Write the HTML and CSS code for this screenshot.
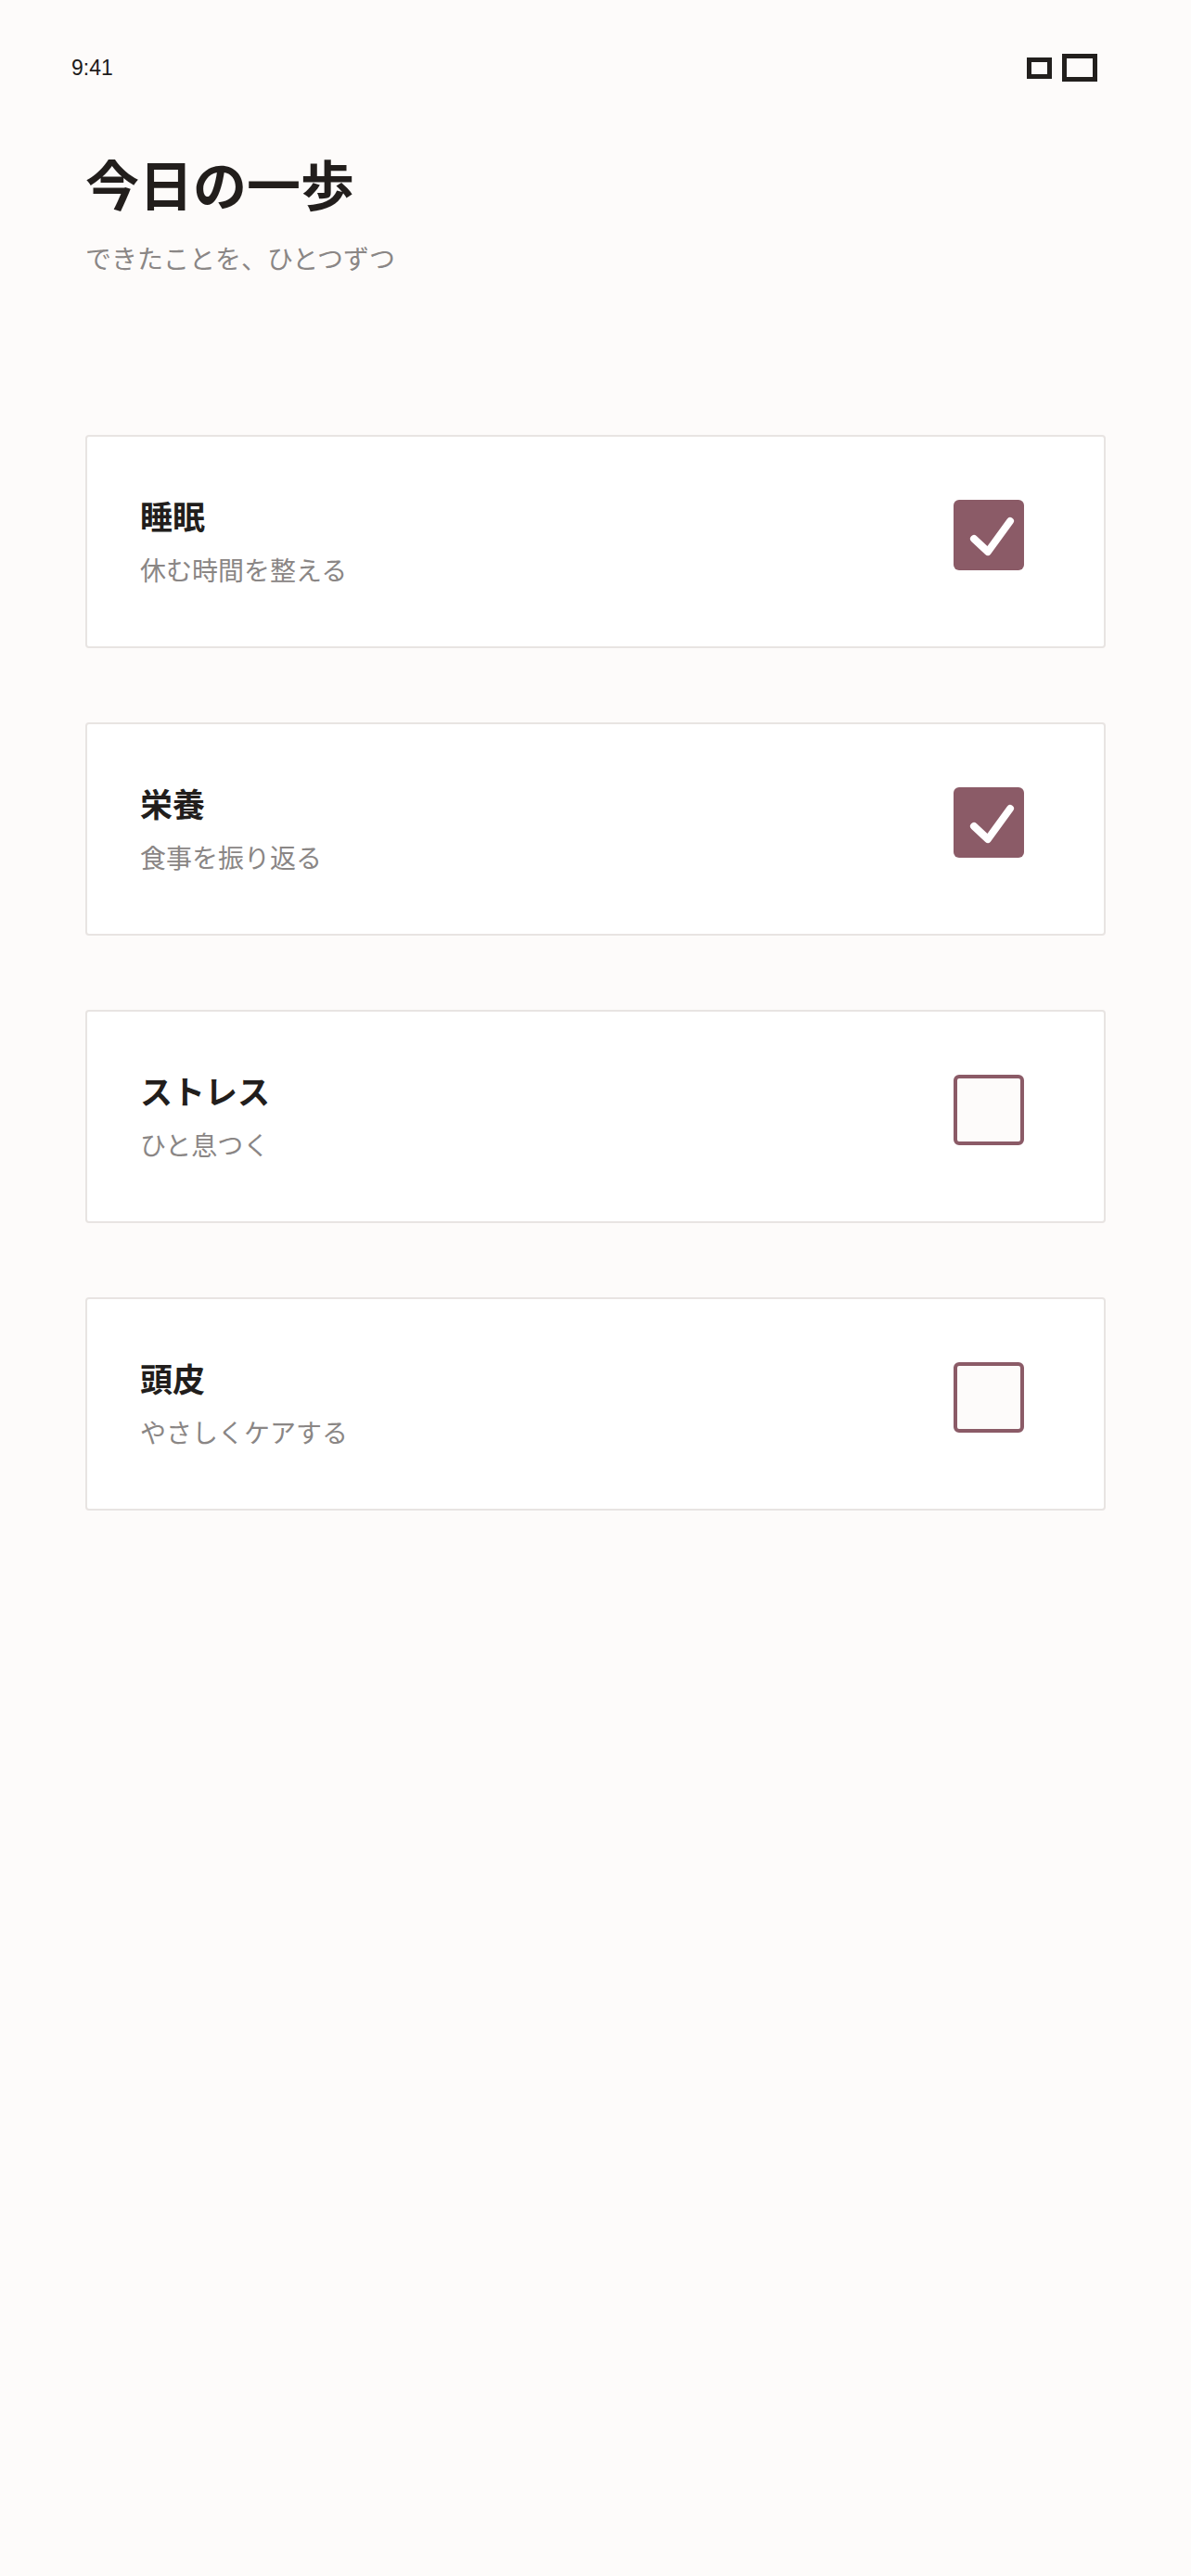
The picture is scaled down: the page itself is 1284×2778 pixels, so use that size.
FILE: index.html
```html
<!DOCTYPE html>
<html lang="ja">
<head>
    <meta charset="UTF-8">
    <meta name="viewport" content="width=device-width, initial-scale=1.0">
    <title>今日の一歩</title>
    <link rel="stylesheet" href="styles.css">
</head>
<body>
    <div class="status-bar">
        <span class="time">9:41</span>
        <div class="status-icons">
            <span class="icon-small"></span>
            <span class="icon-big"></span>
        </div>
    </div>

    <header class="header">
        <h1>今日の一歩</h1>
        <p>できたことを、ひとつずつ</p>
    </header>

    <div class="list">
        <div class="card">
            <div class="text">
                <h2>睡眠</h2>
                <p>休む時間を整える</p>
            </div>
            <div class="check done">
                <svg viewBox="0 0 76 76" width="76" height="76"><path d="M22 42 L37 56 L61 23" /></svg>
            </div>
        </div>
        <div class="card">
            <div class="text">
                <h2>栄養</h2>
                <p>食事を振り返る</p>
            </div>
            <div class="check done">
                <svg viewBox="0 0 76 76" width="76" height="76"><path d="M22 42 L37 56 L61 23" /></svg>
            </div>
        </div>
        <div class="card">
            <div class="text">
                <h2>ストレス</h2>
                <p>ひと息つく</p>
            </div>
            <div class="check"></div>
        </div>
        <div class="card">
            <div class="text">
                <h2>頭皮</h2>
                <p>やさしくケアする</p>
            </div>
            <div class="check"></div>
        </div>
    </div>
</body>
</html>
```

FILE: styles.css
```css
* {
    margin: 0;
    padding: 0;
    box-sizing: border-box;
}

body {
    background-color: #fdfbfa;
    font-family: "Noto Sans CJK JP", "Noto Sans", sans-serif;
    color: #221e1c;
}

/* 状态栏 */
.status-bar {
    height: 146px;
    display: flex;
    align-items: center;
    justify-content: space-between;
    padding: 0 101px 0 77px;
}

.time {
    font-family: "Liberation Sans", Arial, sans-serif;
    font-size: 23px;
    color: #1e1c1b;
}

.status-icons {
    display: flex;
    align-items: center;
    gap: 11px;
}

.icon-small {
    width: 27px;
    height: 23px;
    border: 5px solid #221f1d;
}

.icon-big {
    width: 38px;
    height: 30px;
    border: 5px solid #221f1d;
}

/* 标题 */
.header {
    padding: 17px 0 0 92px;
}

.header h1 {
    font-size: 58px;
    font-weight: 700;
    line-height: 1.2;
}

.header p {
    margin-top: 26px;
    font-size: 28px;
    line-height: 1.4;
    color: #8a8685;
}

/* 卡片列表 */
.list {
    display: flex;
    flex-direction: column;
    gap: 80px;
    margin: 171px 92px 0;
}

.card {
    height: 230px;
    display: flex;
    align-items: center;
    justify-content: space-between;
    padding: 0 86px 0 57px;
    background-color: #fff;
    border: 2px solid #e8e4e2;
    border-radius: 4px;
}

.card h2 {
    font-size: 35px;
    font-weight: 700;
    line-height: 1.3;
}

.card p {
    margin-top: 17px;
    font-size: 28px;
    line-height: 1.4;
    color: #8a8685;
}

.check {
    width: 76px;
    height: 76px;
    margin-bottom: 13px;
    border: 4px solid #8b5b67;
    border-radius: 6px;
    background-color: #fdfbfa;
}

.check.done {
    border: none;
    background-color: #8b5b67;
}

.check svg {
    display: block;
}

.check svg path {
    fill: none;
    stroke: #fff;
    stroke-width: 8;
    stroke-linecap: round;
    stroke-linejoin: round;
}
```
